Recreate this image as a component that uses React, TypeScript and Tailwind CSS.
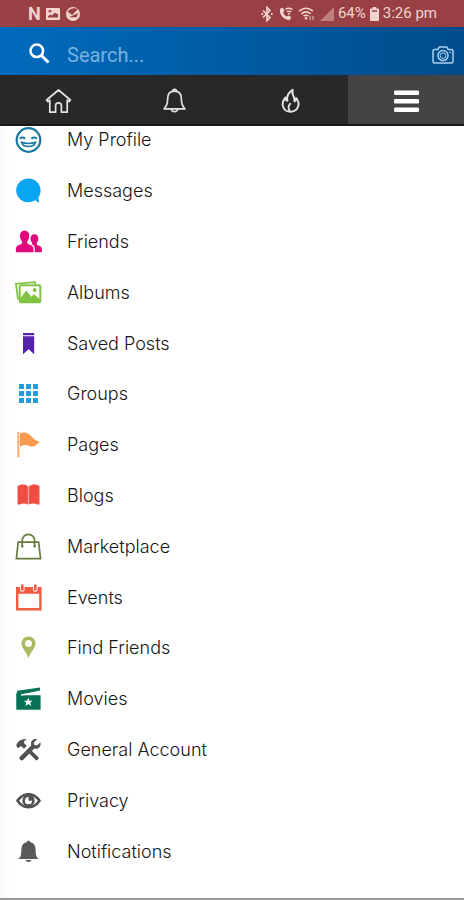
import type { ReactNode } from "react";

type MenuItem = {
  label: string;
  color: string;
  icon: ReactNode;
};

const menuItems: MenuItem[] = [
  {
    label: "My Profile",
    color: "text-[#16799f]",
    icon: (
      <g fill="none" stroke="currentColor" strokeWidth="2.2">
        <circle cx="14.5" cy="14" r="11.8" />
        <path d="M5.8 12.6q2.6-2 5.4 0M17.4 12.6q2.6-2 5.4 0" strokeWidth="2" />
        <path d="M7.5 16.2q7 2.400 14 0c-1.800 5.800-12.200 5.800-14 0z" strokeWidth="1.5" />
      </g>
    ),
  },
  {
    label: "Messages",
    color: "text-[#08a5f3]",
    icon: <path d="M14.4 1.6C7.6 1.6 2.2 7 2.2 13.4s5.2 11.8 12 11.8c2.6 0 5-.7 7-1.9l3.9 2.7-.7-5.6c1.4-2 2.2-4.4 2.2-7C26.6 7 21.2 1.6 14.4 1.6z" />,
  },
  {
    label: "Friends",
    color: "text-[#e0097b]",
    icon: (
      <>
        <path d="M10.6 2.6c3 0 4.600 2.100 4.600 5.200 0 2.600-.8 4.400-1.900 5.500-.5 1.900 0 2.600 1.800 3.300 3.200 1.200 4.400 2 4.400 5v2.600H1.900v-2.600c0-3 1.200-3.800 4.300-5 1.800-.7 2.200-1.400 1.700-3.300C6.800 12.200 6 10.400 6 7.800c0-3.100 1.600-5.200 4.600-5.200z" />
        <path d="M20.4 6.2c2.600 0 3.900 1.800 3.900 4.400 0 2-.6 3.300-1.400 4.200-.4 1.500 0 2.100 1.500 2.700 2.500 1 3.500 1.700 3.500 4.100v2.600h-7.100v-3c0-3-1.400-4.300-3.400-5.200.9-.5.9-.8.6-1.500-.9-.8-1.500-2-1.500-3.900 0-2.600 1.300-4.400 3.900-4.400z" />
      </>
    ),
  },
  {
    label: "Albums",
    color: "text-[#80c342]",
    icon: (
      <>
        <path d="M4 20.3 2 4.700l19-1.600.2 2" fill="none" stroke="currentColor" strokeWidth="1.8" />
        <rect x="5.7" y="6.3" width="20.6" height="17" rx="1" fill="none" stroke="currentColor" strokeWidth="2" />
        <path d="M6 23v-3.500l6.300-8 5 6.200 2.500-2.400 6.200 5V23z" />
        <circle cx="20.700" cy="11" r="1.900" />
      </>
    ),
  },
  {
    label: "Saved Posts",
    color: "text-[#5523aa]",
    icon: <path d="M9 3h11.200v2.200H9zM9 6.200h11.200v18l-5.600-5-5.600 5z" />,
  },
  {
    label: "Groups",
    color: "text-[#219bdf]",
    icon: (
      <>
        {[4, 11, 18].map((y) =>
          [5, 12, 19].map((x) => <rect key={`${x}-${y}`} x={x} y={y} width="5" height="5" rx="0.6" />),
        )}
      </>
    ),
  },
  {
    label: "Pages",
    color: "text-[#fa9a4f]",
    icon: (
      <>
        <path d="M3.2.8h2.200v25.400H3.200z" opacity=".75" />
        <path d="M5.900 2.500c5-2.200 7.400-.6 10 1.400 3.300 2.600 5.300 6.600 9.600 6-2.600 4.800-6.600 6.600-10.300 5-3-1.200-5.600-1.200-9.300.8z" />
      </>
    ),
  },
  {
    label: "Blogs",
    color: "text-[#f04e43]",
    icon: (
      <>
        <path d="M3.500 4.300c3-2.300 8-2.300 10.400 0v18.300c-2.600-1.400-5.800-1.400-8 0H3.500zM15.100 4.300c3-2.300 8-2.300 10.400 0v18.300h-2.400c-2.200-1.400-5.400-1.400-8 0z" />
        <path d="M13.900 4.300h1.200v18.300h-1.200z" opacity=".5" />
      </>
    ),
  },
  {
    label: "Marketplace",
    color: "text-[#667b3d]",
    icon: (
      <g fill="none" stroke="currentColor" strokeWidth="1.7">
        <path d="M4.200 9.200h20.400l2 16.400H2.400z" />
        <path d="M8.200 12.500V7.600a6.200 6.200 0 0 1 12.400 0v4.900" />
        <circle cx="8.200" cy="13.200" r="1.300" fill="currentColor" stroke="none" />
        <circle cx="20.600" cy="13.200" r="1.300" fill="currentColor" stroke="none" />
      </g>
    ),
  },
  {
    label: "Events",
    color: "text-[#f15b40]",
    icon: (
      <>
        <path fillRule="evenodd" d="M2 3h25.600v23.400H2zM4.400 9.800V24h20.800V9.800z" />
        <path d="M8.300.9v4.500M21.300.9v4.500" stroke="#fff" strokeWidth="4.600" strokeLinecap="round" />
        <path d="M8.300 1.500v4M21.300 1.500v4" stroke="currentColor" strokeWidth="2.600" strokeLinecap="round" />
      </>
    ),
  },
  {
    label: "Find Friends",
    color: "text-[#a9ba62]",
    icon: <path fillRule="evenodd" d="M14.500 2.500c-4 0-7 3-7 6.800 0 4.700 4.500 8 7 15 2.500-7 7-10.300 7-15 0-3.800-3-6.800-7-6.800zm0 3.400a3.500 3.500 0 1 1 0 7 3.500 3.500 0 0 1 0-7z" />,
  },
  {
    label: "Movies",
    color: "text-[#087257]",
    icon: (
      <>
        <path d="m2.200 9.300 1.200-3.600L26 2.500v2.900L7.200 10.200h19.400v14.600H2.300z" />
        <path d="m7.200 9.900 19.200-3.400" stroke="#fff" strokeWidth="1.500" />
        <path d="m14.300 12.800 1.200 3h3.200l-2.500 2 1 3.200-2.900-1.900-2.900 1.900 1-3.200-2.500-2h3.200z" fill="#fff" />
      </>
    ),
  },
  {
    label: "General Account",
    color: "text-[#505153]",
    icon: (
      <>
        <path d="M2.200 9.700C3.500 5.400 7 2.700 13 3.500c-2.600.8-3.300 1.900-2.900 3.700l2.700 2.700-2.900 2.900-2.900-2.800-3 2.300zM17.700 14.700l6.700 6.600c1.200 1.200-1.500 3.900-2.700 2.700l-6.600-6.700z" />
        <path d="M23.200 3.200 19.800 6.500l.4 2.500 2.700.6 3.500-3.200c1 4.200-2.100 7.100-6 6.200L9.300 23.700c-2.100 2.100-5.300-1.100-3.200-3.200L17.200 9.400c-1.200-4.100 2-7 6-6.200z" />
      </>
    ),
  },
  {
    label: "Privacy",
    color: "text-[#505153]",
    icon: (
      <>
        <path fillRule="evenodd" d="M2 13.700C8.300 3.500 20.800 3.500 27 13.700 20.800 24 8.300 24 2 13.700zm3.200 0c4.600 7.200 14 7.200 18.600 0-4.600-7-14-7-18.600 0z" />
        <path fillRule="evenodd" d="M14.500 7.500a6.200 6.200 0 1 1 0 12.400 6.200 6.200 0 0 1 0-12.400zm0 2.600a3.600 3.600 0 1 0 3.600 3.600h-3.600z" />
      </>
    ),
  },
  {
    label: "Notifications",
    color: "text-[#58595b]",
    icon: (
      <>
        <path d="M14.500 2.800c1 0 1.400.5 1.500 1.300 3.800.8 5.400 3.500 5.600 7.400.2 5.200.5 8 3.400 9.500H4c2.900-1.500 3.200-4.300 3.400-9.500.2-3.900 1.800-6.600 5.600-7.400.1-.8.500-1.300 1.500-1.300z" />
        <path d="M11.500 22h6c-.8 2.600-5.200 2.600-6 0z" />
      </>
    ),
  },
];

const tabs: MenuItem[] = [
  {
    label: "Home",
    color: "text-[#e4e4e4]",
    icon: (
      <path
        d="m2.600 13 11.900-10 11.900 10-1.300 1.600-1.900-1.400v12H17.400v-6.400a2.900 2.900 0 0 0-5.800 0v6.400H5.800v-12l-1.900 1.400z"
        fill="none"
        stroke="currentColor"
        strokeWidth="1.700"
        strokeLinejoin="round"
      />
    ),
  },
  {
    label: "Alerts",
    color: "text-[#e4e4e4]",
    icon: (
      <g fill="none" stroke="currentColor" strokeWidth="1.700" strokeLinejoin="round">
        <path d="M14.500 4.200c4.500 0 6.700 3.200 6.800 7.300.1 5.500.7 7.600 3.600 10.300H4.100c2.900-2.700 3.500-4.800 3.600-10.300.1-4.100 2.300-7.300 6.800-7.300z" />
        <path d="M12.600 4.300a1.900 1.900 0 1 1 3.800 0M11.300 22c.5 3.600 5.900 3.600 6.400 0" />
      </g>
    ),
  },
  {
    label: "Trending",
    color: "text-[#e4e4e4]",
    icon: (
      <path
        d="M16.800 2.800c-4.600 2.600-6.500 6-5.300 11-1.800-.4-2.200-1.700-2-3.300-5.600 6.300-2.200 14.300 5 14.300s10.600-7.600 5.700-13.700c-.2 1.600-.7 2.600-1.700 3.300.3-2.700-.2-4.300-1.400-6-.9-1.900-1-3.600-.3-5.600zM14.600 16.200c-2.800 3.100-3 5.500-.4 8.400"
        fill="none"
        stroke="currentColor"
        strokeWidth="1.900"
        strokeLinejoin="round"
      />
    ),
  },
  {
    label: "Menu",
    color: "text-white",
    icon: (
      <>
        <rect x="2" y="3.500" width="25" height="4.500" rx="1.200" />
        <rect x="2" y="12" width="25" height="4.500" rx="1.200" />
        <rect x="2" y="20.500" width="25" height="4.500" rx="1.200" />
      </>
    ),
  },
];

function Icon({ children, className = "" }: { children: ReactNode; className?: string }) {
  return (
    <svg viewBox="0 0 28 28" fill="currentColor" aria-hidden="true" className={`size-7 shrink-0 ${className}`}>
      {children}
    </svg>
  );
}

function StatusBar() {
  return (
    <div className="flex h-[27px] items-center justify-between bg-[#984043] pr-[27px] pl-7 text-[#f2d4cf]">
      <div className="flex items-center gap-[6px]">
        <span className="w-3 text-center font-['Liberation_Sans_Narrow','Roboto',sans-serif] text-lg leading-none font-bold">N</span>
        <svg viewBox="0 0 14 12" className="h-3 w-[14px]" fill="currentColor" aria-hidden="true">
          <path fillRule="evenodd" d="M1 0h12q1 0 1 1v10q0 1-1 1H1q-1 0-1-1V1q0-1 1-1zm1 9.500h10V6L8.500 4.800 6 7.500 4 6.500 2 8.500zM2.500 2.300v2h3v-2z" />
        </svg>
        <svg viewBox="0 0 14 14" className="size-[14px]" fill="currentColor" aria-hidden="true">
          <path fillRule="evenodd" d="M7 0a7 7 0 1 1 0 14A7 7 0 0 1 7 0zM1.700 4.800 6 8l6-5.700C9 .3 3.200.8 1.700 4.800zM3 10.300h7.500L12.300 6z" />
        </svg>
      </div>
      <div className="flex items-center">
        <svg viewBox="0 0 14 16" className="mr-1 h-4 w-[14px]" fill="none" stroke="currentColor" strokeWidth="1.700" aria-hidden="true">
          <path d="m3 4.500 7 7L7 14.500v-13l3 3-7 7" />
          <path d="M1.500 8h1.600M11 8h1.600" strokeWidth="2" />
        </svg>
        <svg viewBox="0 0 16 16" className="mr-1 size-4" aria-hidden="true">
          <path d="M2.500 2.200c-2.400 5.400 3 12 9.400 11.700l1.400-2.800-3.200-1.700-1.700 1.100C6.600 9.500 5.500 8 5.200 6.300l1.200-1.800-1.500-2.800z" fill="currentColor" />
          <path d="M7.500 3.300q3.300-2 6.800.2M8.900 5.700q2-1.200 4.200.2" fill="none" stroke="currentColor" strokeWidth="1.500" />
          <circle cx="11" cy="7.700" r="1" fill="currentColor" />
        </svg>
        <svg viewBox="0 0 18 16" className="mr-1 h-4 w-[18px]" fill="none" stroke="currentColor" strokeWidth="1.500" aria-hidden="true">
          <path d="M1 5.200q7-5.800 14 0M3.300 7.800q4.700-3.900 9.400 0M5.500 10.200q2.500-2 5 0" />
          <circle cx="8" cy="12.200" r="1.300" fill="currentColor" stroke="none" />
          <path d="M12.300 10v4M15 10v4" opacity=".6" />
        </svg>
        <svg viewBox="0 0 14 14" className="mr-1 size-[14px] text-[#c08080]" fill="currentColor" aria-hidden="true">
          <path d="M14 0v14H0z" />
        </svg>
        <span className="text-[15px] leading-none">64%</span>
        <svg viewBox="0 0 9 14" className="mx-1 h-[14px] w-[9px]" fill="currentColor" aria-hidden="true">
          <path fillRule="evenodd" d="M2.700 0h3.600v1.500H8q1 0 1 1V13q0 1-1 1H1q-1 0-1-1V2.500q0-1 1-1h1.700zM2 3.300v1.500h5V3.300z" />
        </svg>
        <span className="text-[15px] leading-none">3:26 pm</span>
      </div>
    </div>
  );
}

function SearchBar() {
  return (
    <div className="flex h-12 items-center bg-linear-to-r from-[#006bbd] to-[#004c8a] pt-1 pr-[10px] pl-7">
      <label htmlFor="search" aria-label="Search">
        <svg viewBox="0 0 24 24" className="size-6 text-white" fill="none" stroke="currentColor" strokeWidth="2.500" aria-hidden="true">
          <circle cx="8.800" cy="9.800" r="6.300" />
          <path d="m13.500 14.500 7 7" strokeWidth="3" />
        </svg>
      </label>
      <input
        id="search"
        type="text"
        placeholder="Search..."
        className="ml-[15px] min-w-0 flex-1 bg-transparent pt-1 text-xl text-white outline-none placeholder:text-[#79b2de]"
      />
      <button type="button" aria-label="Camera" className="pt-1 text-[#a9d0ef]">
        <svg viewBox="0 0 22 18" className="h-[18px] w-[22px]" fill="none" stroke="currentColor" strokeWidth="1.500" aria-hidden="true">
          <path d="M2.500 3.500h3.300l1.500-2.400h7.400l1.500 2.400h3.300q1.500 0 1.500 1.500v10.600q0 1.500-1.500 1.500h-17Q1 17.100 1 15.600V5q0-1.500 1.500-1.500z" />
          <circle cx="11" cy="9.600" r="5" />
          <circle cx="11" cy="9.600" r="2.800" strokeWidth="1" />
          <path d="M17.500 6.300H19" />
        </svg>
      </button>
    </div>
  );
}

function TabBar() {
  return (
    <nav className="grid h-[51px] grid-cols-4 border-b-2 border-[#191919] bg-[#282828]">
      {tabs.map((tab) => (
        <button
          key={tab.label}
          type="button"
          aria-label={tab.label}
          className={`flex items-center justify-center pt-[2px] ${tab.color} ${tab.label === "Menu" ? "bg-[#444444]" : ""}`}
        >
          <Icon>{tab.icon}</Icon>
        </button>
      ))}
    </nav>
  );
}

export default function App() {
  return (
    <div className="flex min-h-screen flex-col border-b-2 border-[#999999] bg-white font-['Roboto',sans-serif]">
      <header className="relative z-10">
        <StatusBar />
        <SearchBar />
        <TabBar />
      </header>

      {/* First row is scrolled slightly under the tab bar */}
      <ul className="-mt-[11px] flex flex-1 flex-col bg-linear-to-r from-[#fafafa] to-white to-[12px] pb-[21px] font-['Inter',sans-serif]">
        {menuItems.map((item) => (
          <li key={item.label} className="flex flex-1">
            <a href="#" className="flex flex-1 items-center gap-[25px] pl-[14px] text-lg font-light text-[#161616]">
              <Icon className={item.color}>{item.icon}</Icon>
              {item.label}
            </a>
          </li>
        ))}
      </ul>
    </div>
  );
}
